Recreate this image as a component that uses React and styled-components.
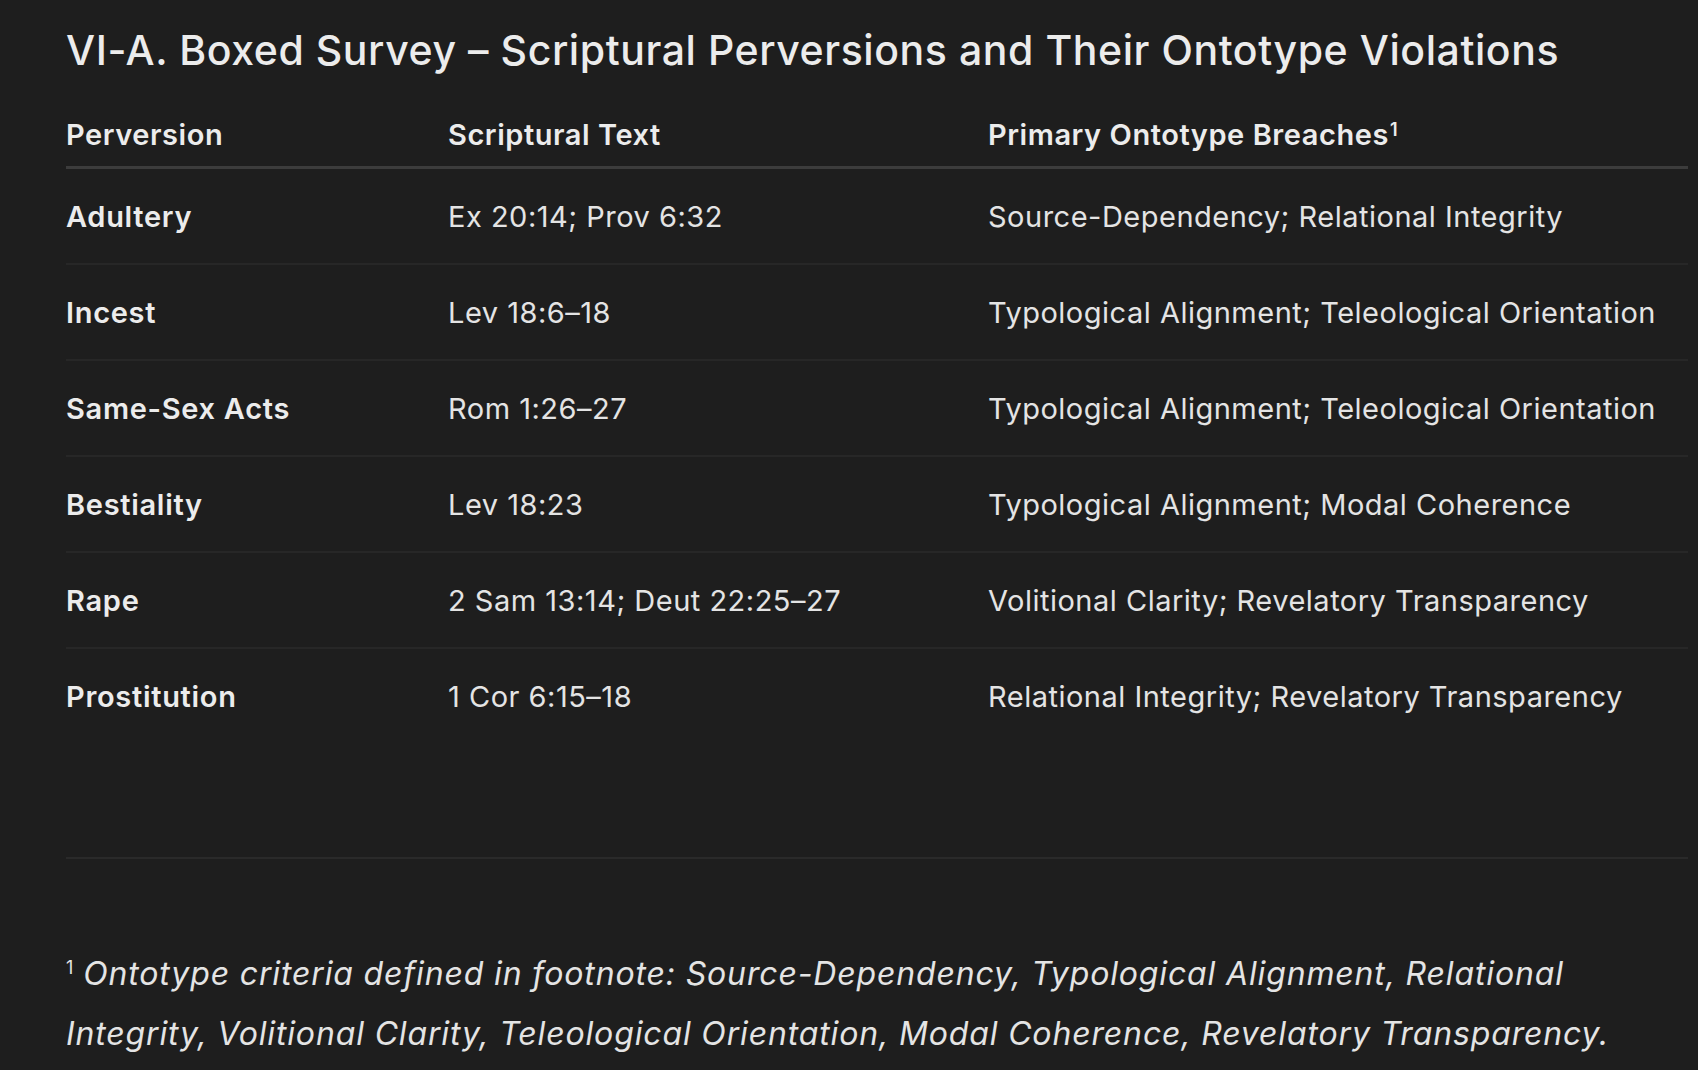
import React from "react";
import styled, { createGlobalStyle } from "styled-components";

const GlobalStyle = createGlobalStyle`
  html, body {
    margin: 0;
    padding: 0;
    background: #1e1e1e;
  }
  body {
    font-family: Inter, "Noto Sans", "Liberation Sans", sans-serif;
    color: #ececec;
    -webkit-font-smoothing: antialiased;
  }
`;

const rows = [
  { name: "Adultery", text: "Ex 20:14; Prov 6:32", breaches: "Source-Dependency; Relational Integrity" },
  { name: "Incest", text: "Lev 18:6–18", breaches: "Typological Alignment; Teleological Orientation" },
  { name: "Same-Sex Acts", text: "Rom 1:26–27", breaches: "Typological Alignment; Teleological Orientation" },
  { name: "Bestiality", text: "Lev 18:23", breaches: "Typological Alignment; Modal Coherence" },
  { name: "Rape", text: "2 Sam 13:14; Deut 22:25–27", breaches: "Volitional Clarity; Revelatory Transparency" },
  { name: "Prostitution", text: "1 Cor 6:15–18", breaches: "Relational Integrity; Revelatory Transparency" },
];

export default function App() {
  return (
    <>
      <GlobalStyle />
      <Page>
        <Title>VI-A. Boxed Survey – Scriptural Perversions and Their Ontotype Violations</Title>
        <TableWrap>
          <HeadRow>
            <HeadCell>Perversion</HeadCell>
            <HeadCell>Scriptural Text</HeadCell>
            <HeadCell>Primary Ontotype Breaches<Sup>1</Sup></HeadCell>
          </HeadRow>
          {rows.map((r, i) => (
            <Row key={r.name} last={i === rows.length - 1}>
              <NameCell>{r.name}</NameCell>
              <Cell>{r.text}</Cell>
              <Cell>{r.breaches}</Cell>
            </Row>
          ))}
        </TableWrap>
        <Footnote>
          <FootSup>1</FootSup> Ontotype criteria defined in footnote: Source-Dependency, Typological Alignment, Relational
          Integrity, Volitional Clarity, Teleological Orientation, Modal Coherence, Revelatory Transparency.
        </Footnote>
      </Page>
    </>
  );
}

const Page = styled.div`
  padding: 20px 10px 0 66px;
  height: 1070px;
  box-sizing: border-box;
  overflow: hidden;
`;

const Title = styled.h1`
  margin: 0 0 29px;
  font-size: 41px;
  line-height: 60px;
  font-weight: 500;
  letter-spacing: 0.57px;
  color: #ececec;
`;

const TableWrap = styled.div`
  border-bottom: 2px solid #2a2a2a;
  padding-bottom: 114px;
`;

const HeadRow = styled.div`
  display: grid;
  grid-template-columns: 382px 540px 1fr;
  height: 50px;
  align-items: center;
  border-bottom: 3px solid #3c3c3c;
  padding-bottom: 7px;
`;

const HeadCell = styled.div`
  font-size: 29px;
  font-weight: 600;
  letter-spacing: 0.55px;
  color: #ececec;
`;

const Sup = styled.sup`
  font-size: 18px;
  font-weight: 600;
  vertical-align: top;
  position: relative;
  top: 2px;
  margin-left: 1px;
`;

const Row = styled.div`
  display: grid;
  grid-template-columns: 382px 540px 1fr;
  align-items: center;
  height: 94px;
  border-bottom: ${({ last }) => (last ? "none" : "2px solid #272727")};
`;

const Cell = styled.div`
  font-size: 29px;
  font-weight: 400;
  color: #e4e4e4;
  letter-spacing: 0.5px;
`;

const NameCell = styled(Cell)`
  font-weight: 600;
  color: #ececec;
  letter-spacing: 0.7px;
`;

const Footnote = styled.p`
  margin: 85px 0 0;
  font-size: 32px;
  line-height: 60px;
  font-style: italic;
  letter-spacing: 0.85px;
  color: #e4e4e4;
`;

const FootSup = styled.sup`
  font-size: 18px;
  font-style: normal;
  letter-spacing: 0;
  vertical-align: top;
  position: relative;
  top: -6px;
`;
